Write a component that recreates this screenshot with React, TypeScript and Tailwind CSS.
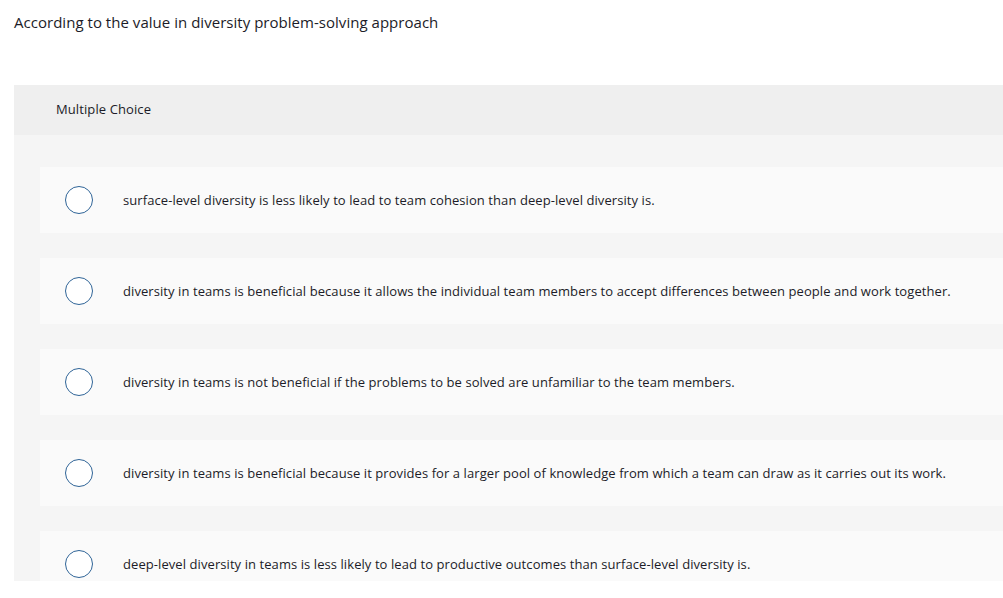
import React from "react";

const options = [
  "surface-level diversity is less likely to lead to team cohesion than deep-level diversity is.",
  "diversity in teams is beneficial because it allows the individual team members to accept differences between people and work together.",
  "diversity in teams is not beneficial if the problems to be solved are unfamiliar to the team members.",
  "diversity in teams is beneficial because it provides for a larger pool of knowledge from which a team can draw as it carries out its work.",
  "deep-level diversity in teams is less likely to lead to productive outcomes than surface-level diversity is.",
];

export default function App() {
  return (
    <div
      className="w-[1003px] h-[598px] overflow-hidden bg-white text-[#1c1c28]"
      style={{ fontFamily: "'Open Sans', sans-serif" }}
    >
      <div className="pl-[14px] pt-[13px] text-[15px] leading-[18px] tracking-[0.03px]">
        According to the value in diversity problem-solving approach
      </div>
      <div className="ml-[14px] mt-[54px] w-[1000px] h-[496px] overflow-hidden bg-[#f5f5f5]">
        <div className="h-[50px] bg-[#efefef] pl-[42px] flex items-center text-[13px] tracking-[0.1px]">
          Multiple Choice
        </div>
        <div className="pt-[32px] pl-[26px] flex flex-col gap-[25px]">
          {options.map((o, i) => (
            <div key={i} className="h-[66px] shrink-0 bg-[#fafafa] flex items-center">
              <div className="ml-[25px] w-[28px] h-[28px] rounded-full border-[1.5px] border-[#2f6497] bg-white shrink-0" />
              <div className="ml-[30px] text-[13px] leading-[16px] tracking-[0.075px]">{o}</div>
            </div>
          ))}
        </div>
      </div>
    </div>
  );
}
